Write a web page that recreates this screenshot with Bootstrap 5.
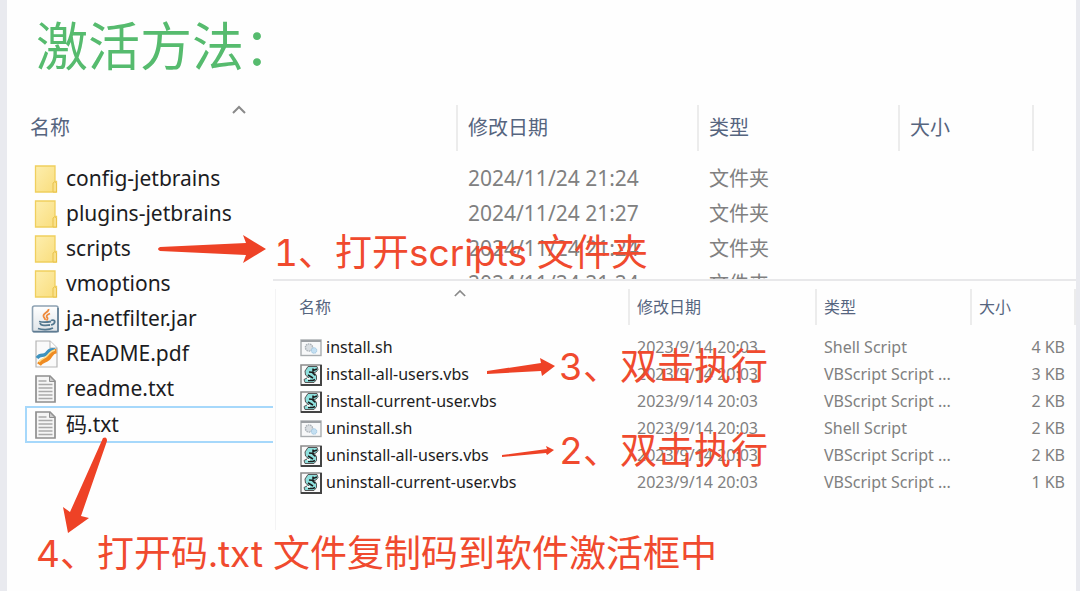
<!DOCTYPE html>
<html lang="zh-CN">
<head>
<meta charset="utf-8">
<meta name="viewport" content="width=device-width, initial-scale=1">
<title>激活方法</title>
<link href="https://cdn.jsdelivr.net/npm/bootstrap@5.3.0/dist/css/bootstrap.min.css" rel="stylesheet">
<style>
  body { background: #e9eaef; font-family: "Noto Sans", "Noto Sans CJK SC", sans-serif; }
  .sheet { background: #fefefe; margin: 0 4px 0 7px; }
  .page-title { font-family: "Noto Sans CJK SC", sans-serif; font-size: 52px; line-height: 64px; font-weight: 400; color: #56bb6e; padding: 12px 0 0 29px; }

  .explorer { table-layout: fixed; width: 100%; white-space: nowrap; border-collapse: separate; border-spacing: 0; }
  .explorer th { font-weight: 400; color: #56657f; padding: 0; position: relative; }
  .explorer th + th { border-left: 2px solid #ececec; }
  .explorer td { color: #808080; padding: 0; overflow: hidden; }
  .explorer td:first-child { color: #1c1c22; }
  .explorer svg { display: block; flex: none; }
  .sort-mark { position: absolute; top: 0; }

  .listing-main { margin-top: 29px; font-size: 21px; }
  .listing-main th { height: 46px; font-size: 20px; line-height: 46px; padding-left: 10px; }
  .listing-main th:first-child { padding-left: 23px; }
  .listing-main td { height: 35px; line-height: 35px; padding-left: 12px; }
  .listing-main td:first-child { padding-left: 24px; }
  .listing-main .spacer td { height: 10px; }
  .listing-main .zh { font-size: 20px; }
  .listing-main .sort-mark { left: 225px; }
  .entry { gap: 7px; }
  .selected td:first-child { padding: 0; }
  .selected .entry { border: 2px solid #a6d8fb; margin-left: 18px; padding-left: 4px; height: 37px; line-height: 33px; }

  .scripts-panel { top: 279px; left: 266px; right: 0; background: #fefefe; border-top: 2px solid #e8e8ea; padding-top: 8px; }
  .sub-frame { border-left: 1px solid #f3f3f4; margin-left: 2px; min-height: 241px; }
  .listing-sub { font-size: 16px; }
  .listing-sub th { height: 36px; line-height: 36px; padding-left: 7px; }
  .listing-sub th:first-child { padding-left: 23px; }
  .listing-sub td { height: 27px; line-height: 27px; padding-left: 9px; }
  .listing-sub td:first-child { padding-left: 24px; }
  .listing-sub .spacer td { height: 9px; }
  .listing-sub .sort-mark { left: 178px; }
  .listing-sub td:nth-child(4) { text-align: right; padding-right: 9px; }

  .note { position: absolute; margin: 0; font-family: Inter, "Noto Sans CJK SC", sans-serif; font-variant-numeric: tabular-nums; font-size: 37px; line-height: 48px; color: #f04a2e; white-space: pre; }
  .arrows { position: absolute; left: 0; top: 0; pointer-events: none; }
</style>
</head>
<body>
<svg width="0" height="0" class="position-absolute" aria-hidden="true">
  <defs>
    <linearGradient id="gold" x1="0" y1="0" x2="1" y2="1"><stop offset="0" stop-color="#fdeeae"/><stop offset="1" stop-color="#f9dd7c"/></linearGradient>
    <linearGradient id="steel" x1="0" y1="0" x2="0" y2="1"><stop offset="0" stop-color="#fff"/><stop offset="1" stop-color="#dfe4e8"/></linearGradient>
    <symbol id="i-folder" viewBox="0 0 28 28"><path d="M4.500 1H24v15.500h1.500V27h-21z" fill="url(#gold)" stroke="#f0cf5e" stroke-width="1.300"/><path d="M22 27V18q1.700-2.500 3.500 0v9z" fill="#f9e08a" stroke="#e9c24a"/></symbol>
    <symbol id="i-jar" viewBox="0 0 28 28"><rect x="1.500" y="1" width="25.500" height="26" rx="2" fill="url(#steel)" stroke="#8da1b2" stroke-width="1.600"/><path d="M2 26.500h25V3" fill="none" stroke="#5f7c93" stroke-width="1.500"/><path d="M17.500 4c1 3-5.500 4-5 7 .2 2 2 2 1.500 4M19 8.500c-4 1.500-4 3-2.500 4.500.5 1-.2 1.500-1 2.500" fill="none" stroke="#ee8a3c" stroke-width="1.800"/><path d="M8 16.500c3 .8 8 .8 12 0M9 18c1 3 3 2.500 10 2M20 15.500c5-1.500 5 3 0 4.500M7 23.500c4 1.500 11 1.500 15-.5" fill="none" stroke="#54788f" stroke-width="1.800"/></symbol>
    <symbol id="i-pdf" viewBox="0 0 28 28"><path d="M5 1h14l7 7v19H5z" fill="#fafafa" stroke="#b5b5b5" stroke-width="1.200"/><path d="M19 1v7h7" fill="#fff" stroke="#b5b5b5"/><path d="M6 18c4-5 6-1 9-4s3-5 9-4" fill="none" stroke="#3e93bf" stroke-width="3.500"/><path d="M8 24.500c3-5 6-3 9-6s3-7 8.500-7.500" fill="none" stroke="#ef8b22" stroke-width="4.500"/><path d="M8 22c3-4 5-3 8-6s3-5 8-6" fill="none" stroke="#ffe08a" stroke-width="1.400"/></symbol>
    <symbol id="i-txt" viewBox="0 0 28 28"><path d="M5 1h14l5 5v21H5z" fill="#f5f5f5" stroke="#8f8f8f" stroke-width="1.700"/><path d="M18.500 1v5.500H24z" fill="#ccc" stroke="#8f8f8f"/><path d="M7.500 6h8M7.500 9.500h14M7.500 13h14M7.500 16.500h14M7.500 20h14M7.500 23.500h14" stroke="#a9a9a9" stroke-width="1.300"/></symbol>
    <symbol id="i-sh" viewBox="0 0 22 22"><rect x="1" y="3" width="20" height="15.500" fill="#f7f8f9" stroke="#a9adb0" stroke-width="1.400"/><path d="M1 4h20" stroke="#9b9fa3" stroke-width="2"/><circle cx="9" cy="10.500" r="3.600" fill="#d9dee2" stroke="#a9b0b6" stroke-width="1.400" stroke-dasharray="1.500 .7"/><circle cx="14" cy="13.500" r="2.800" fill="#c3dff2" stroke="#9cc3de" stroke-dasharray="1.300 .6"/></symbol>
    <symbol id="i-vbs" viewBox="0 0 22 22"><path d="M1 1h20v20H1z" fill="#fafafa" stroke="#8c8c8c" stroke-width="1.600"/><path d="M1 21h20V1" fill="none" stroke="#444" stroke-width="2"/><path d="M8 2.500h9l1 3-2 2.500-2 .5 2.500 3v4L14 18.500H5l-1-3 3-1.500h2L5.500 11 5 7z" fill="#8ee0dd" stroke="#555" stroke-width="1"/><path d="M13 6.500l4-1.500M9 8l5 .5M8 11l5 3M12 8.500l3.500 3M8 16.500h5l2-1M13 4.500v3" fill="none" stroke="#1c1c1c" stroke-width="1.500"/><path d="M7 14.500l3 .5" stroke="#fff" stroke-width="1.500"/></symbol>
    <symbol id="i-up" viewBox="0 0 14 9"><path d="M1 8l6-6 6 6" fill="none" stroke="#8a8a8a" stroke-width="2"/></symbol>
  </defs>
</svg>

<main class="sheet position-relative min-vh-100 overflow-hidden">
  <h1 class="page-title m-0">激活方法：</h1>

  <table class="explorer listing-main">
    <colgroup><col style="width:449px"><col style="width:241px"><col style="width:201px"><col style="width:134px"><col></colgroup>
    <thead><tr>
      <th scope="col">名称<svg class="sort-mark" width="14" height="9"><use href="#i-up"/></svg></th>
      <th scope="col">修改日期</th><th scope="col">类型</th><th scope="col">大小</th><th></th>
    </tr></thead>
    <tbody>
      <tr class="spacer"><td colspan="5"></td></tr>
      <tr><td><div class="entry d-flex align-items-center"><svg width="28" height="28"><use href="#i-folder"/></svg>config-jetbrains</div></td><td>2024/11/24 21:24</td><td class="zh">文件夹</td><td></td><td></td></tr>
      <tr><td><div class="entry d-flex align-items-center"><svg width="28" height="28"><use href="#i-folder"/></svg>plugins-jetbrains</div></td><td>2024/11/24 21:27</td><td class="zh">文件夹</td><td></td><td></td></tr>
      <tr><td><div class="entry d-flex align-items-center"><svg width="28" height="28"><use href="#i-folder"/></svg>scripts</div></td><td>2024/11/24 21:24</td><td class="zh">文件夹</td><td></td><td></td></tr>
      <tr><td><div class="entry d-flex align-items-center"><svg width="28" height="28"><use href="#i-folder"/></svg>vmoptions</div></td><td>2024/11/24 21:24</td><td class="zh">文件夹</td><td></td><td></td></tr>
      <tr><td><div class="entry d-flex align-items-center"><svg width="28" height="28"><use href="#i-jar"/></svg>ja-netfilter.jar</div></td><td></td><td></td><td></td><td></td></tr>
      <tr><td><div class="entry d-flex align-items-center"><svg width="28" height="28"><use href="#i-pdf"/></svg>README.pdf</div></td><td></td><td></td><td></td><td></td></tr>
      <tr><td><div class="entry d-flex align-items-center"><svg width="28" height="28"><use href="#i-txt"/></svg>readme.txt</div></td><td></td><td></td><td></td><td></td></tr>
      <tr class="selected"><td><div class="entry d-flex align-items-center"><svg width="28" height="28"><use href="#i-txt"/></svg>码.txt</div></td><td></td><td></td><td></td><td></td></tr>
    </tbody>
  </table>

  <section class="scripts-panel position-absolute">
    <div class="sub-frame">
    <table class="explorer listing-sub">
      <colgroup><col style="width:352px"><col style="width:187px"><col style="width:155px"><col style="width:104px"><col></colgroup>
      <thead><tr>
        <th scope="col">名称<svg class="sort-mark" width="12" height="8"><use href="#i-up"/></svg></th>
        <th scope="col">修改日期</th><th scope="col">类型</th><th scope="col">大小</th><th></th>
      </tr></thead>
      <tbody>
        <tr class="spacer"><td colspan="5"></td></tr>
        <tr><td><div class="d-flex align-items-center"><svg class="me-1" width="22" height="22"><use href="#i-sh"/></svg>install.sh</div></td><td>2023/9/14 20:03</td><td>Shell Script</td><td>4 KB</td><td></td></tr>
        <tr><td><div class="d-flex align-items-center"><svg class="me-1" width="22" height="22"><use href="#i-vbs"/></svg>install-all-users.vbs</div></td><td>2023/9/14 20:03</td><td>VBScript Script ...</td><td>3 KB</td><td></td></tr>
        <tr><td><div class="d-flex align-items-center"><svg class="me-1" width="22" height="22"><use href="#i-vbs"/></svg>install-current-user.vbs</div></td><td>2023/9/14 20:03</td><td>VBScript Script ...</td><td>2 KB</td><td></td></tr>
        <tr><td><div class="d-flex align-items-center"><svg class="me-1" width="22" height="22"><use href="#i-sh"/></svg>uninstall.sh</div></td><td>2023/9/14 20:03</td><td>Shell Script</td><td>2 KB</td><td></td></tr>
        <tr><td><div class="d-flex align-items-center"><svg class="me-1" width="22" height="22"><use href="#i-vbs"/></svg>uninstall-all-users.vbs</div></td><td>2023/9/14 20:03</td><td>VBScript Script ...</td><td>2 KB</td><td></td></tr>
        <tr><td><div class="d-flex align-items-center"><svg class="me-1" width="22" height="22"><use href="#i-vbs"/></svg>uninstall-current-user.vbs</div></td><td>2023/9/14 20:03</td><td>VBScript Script ...</td><td>1 KB</td><td></td></tr>
      </tbody>
    </table>
    </div>
  </section>

  <svg class="arrows" width="600" height="560" viewBox="7 0 600 560" fill="#ee4226" aria-hidden="true">
    <path d="M160 247L246 243 243 235 266 249 243 263 246 255 160 251Q156 249 160 247z"/>
    <path d="M487 371L541 363 540 358 555 366 542 376 541 371 487 374z"/>
    <path d="M502 455L547 449 546 446 554 450 547 455 546 453 502 457z"/>
    <path d="M103 438Q107 436 107 441L81 516 89 518 68 533 63 507 70 512z"/>
  </svg>
  <p class="note" style="left:267px;top:229px">1、打开scripts 文件夹</p>
  <p class="note" style="left:552px;top:343px">3、双击执行</p>
  <p class="note" style="left:552px;top:427px">2、双击执行</p>
  <p class="note" style="left:29px;top:530px">4、打开码.txt 文件复制码到软件激活框中</p>
</main>
<script src="https://cdn.jsdelivr.net/npm/bootstrap@5.3.0/dist/js/bootstrap.bundle.min.js"></script>
</body>
</html>
